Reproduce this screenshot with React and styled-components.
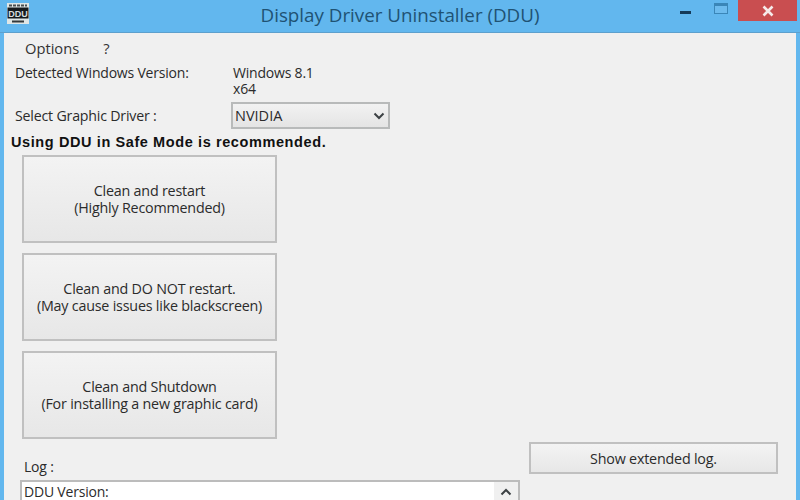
import React from "react";
import styled, { createGlobalStyle } from "styled-components";

const GlobalStyle = createGlobalStyle`
  html, body {
    margin: 0;
    padding: 0;
    width: 800px;
    height: 500px;
    overflow: hidden;
    background: #62b7ee;
  }
  * {
    box-sizing: border-box;
  }
`;

const App = () => {
  return (
    <Win>
      <GlobalStyle />
      <TitleBar>
        <AppIcon viewBox="0 0 22 21">
          <rect x="0" y="0" width="22" height="21" fill="#dfe6e6" />
          <path d="M2 2.5h18" stroke="#4a4e50" strokeWidth="2" strokeDasharray="3 1" />
          <rect x="0.5" y="4.5" width="21" height="11" fill="#15191c" />
          <text x="11" y="13.5" textAnchor="middle" fontFamily="Liberation Sans" fontWeight="700" fontSize="9" fill="#d5dcde">
            DDU
          </text>
          <rect x="5" y="17.5" width="12" height="2" fill="#33383a" />
        </AppIcon>
        <Title>Display Driver Uninstaller (DDU)</Title>
        <Controls>
          <MinButton />
          <MaxButton />
          <CloseButton>
            <svg width="12" height="12" viewBox="0 0 12 12">
              <path d="M1.5 1.5l9 9M10.5 1.5l-9 9" stroke="#f6eaea" strokeWidth="2.6" />
            </svg>
          </CloseButton>
        </Controls>
      </TitleBar>
      <Body>
        <Menu>
          <MenuItem>Options</MenuItem>
          <MenuItem>?</MenuItem>
        </Menu>
        <InfoRow>
          <InfoLabel>Detected Windows Version:</InfoLabel>
          <InfoValue>
            Windows 8.1
            <br />
            x64
          </InfoValue>
        </InfoRow>
        <SelectRow>
          <SelectLabel>Select Graphic Driver :</SelectLabel>
          <Combo>
            <span>NVIDIA</span>
            <svg width="12" height="8" viewBox="0 0 12 8">
              <path d="M1.5 1.5L6 6l4.5-4.5" fill="none" stroke="#3c4144" strokeWidth="2" />
            </svg>
          </Combo>
        </SelectRow>
        <Warning>Using DDU in Safe Mode is recommended.</Warning>
        <Actions>
          <ActionButton>
            Clean and restart
            <br />
            (Highly Recommended)
          </ActionButton>
          <ActionButton>
            Clean and DO NOT restart.
            <br />
            (May cause issues like blackscreen)
          </ActionButton>
          <ActionButton>
            Clean and Shutdown
            <br />
            (For installing a new graphic card)
          </ActionButton>
        </Actions>
        <Bottom>
          <LogColumn>
            <LogLabel>Log :</LogLabel>
            <LogBox>
              <LogText>DDU Version:</LogText>
              <ScrollBar>
                <svg width="12" height="8" viewBox="0 0 12 8">
                  <path d="M1.5 6.5L6 2l4.5 4.5" fill="none" stroke="#3c4144" strokeWidth="2" />
                </svg>
              </ScrollBar>
            </LogBox>
          </LogColumn>
          <LogButton>Show extended log.</LogButton>
        </Bottom>
      </Body>
    </Win>
  );
};
export default App;

const Win = styled.div`
  width: 800px;
  height: 500px;
  display: flex;
  flex-direction: column;
  overflow: hidden;
  background: #62b7ee;
  font-family: "Open Sans", "Liberation Sans", sans-serif;
  color: #2b2b2b;
`;
const TitleBar = styled.div`
  height: 33px;
  flex-shrink: 0;
  display: flex;
  align-items: flex-start;
  position: relative;
  padding-left: 7px;
  border-bottom: 1px solid #5da0cd;
`;
const AppIcon = styled.svg`
  width: 22px;
  height: 21px;
  margin-top: 3px;
`;
const Title = styled.div`
  position: absolute;
  left: 0;
  right: 0;
  top: 2px;
  text-align: center;
  font-size: 18.8px;
  line-height: 26px;
  color: #1f5273;
`;
const Controls = styled.div`
  margin-left: auto;
  display: flex;
  align-items: flex-start;
  margin-right: 3px;
`;
const MinButton = styled.div`
  width: 11px;
  height: 3px;
  background: #143a58;
  margin-top: 11px;
  margin-right: 23px;
`;
const MaxButton = styled.div`
  width: 14px;
  height: 11px;
  margin-top: 3px;
  margin-right: 10px;
  border: 1.5px solid #3a86b8;
  border-top-width: 3px;
  background: #6dbbee;
`;
const CloseButton = styled.div`
  width: 59px;
  height: 21px;
  background: #c94e50;
  display: flex;
  align-items: center;
  justify-content: center;
`;
const Body = styled.div`
  flex: 1;
  min-height: 0;
  margin: 0 4px;
  background: #f0f0f0;
  display: flex;
  flex-direction: column;
  font-size: 14px;
  letter-spacing: -0.2px;
  & > * {
    flex-shrink: 0;
  }
`;
const Menu = styled.div`
  display: flex;
  gap: 24px;
  padding: 4px 0 0 21px;
  height: 32px;
  font-size: 14.7px;
  line-height: 22px;
  letter-spacing: 0;
`;
const MenuItem = styled.div`
  color: #333;
`;
const InfoRow = styled.div`
  display: flex;
  padding-left: 11px;
  height: 37px;
  line-height: 16px;
`;
const InfoLabel = styled.div`
  width: 218px;
`;
const InfoValue = styled.div``;
const SelectRow = styled.div`
  display: flex;
  align-items: center;
  padding-left: 11px;
  height: 27px;
`;
const SelectLabel = styled.div`
  width: 216px;
  font-size: 14.2px;
`;
const Combo = styled.div`
  width: 159px;
  height: 27px;
  border: 2px solid #b8baba;
  background: linear-gradient(#f2f2f2, #e4e4e4);
  display: flex;
  align-items: center;
  justify-content: space-between;
  padding: 0 2px;
  font-size: 14.5px;
  letter-spacing: 0;
  & svg {
    margin-right: 1px;
  }
`;
const Warning = styled.div`
  padding: 5px 0 0 7px;
  height: 26px;
  font-family: "Liberation Sans", sans-serif;
  font-size: 14.5px;
  line-height: 16px;
  font-weight: 700;
  letter-spacing: 0.6px;
  color: #111;
`;
const Actions = styled.div`
  display: flex;
  flex-direction: column;
  gap: 10px;
  padding-left: 18px;
`;
const ActionButton = styled.div`
  width: 255px;
  height: 88px;
  border: 2px solid #c0c0c0;
  background: linear-gradient(#f3f3f3, #e7e7e7);
  display: flex;
  align-items: center;
  justify-content: center;
  text-align: center;
  font-size: 14.3px;
  line-height: 17.5px;
`;
const Bottom = styled.div`
  display: flex;
  margin-top: 3px;
  padding-left: 16px;
  gap: 9px;
`;
const LogColumn = styled.div`
  width: 500px;
`;
const LogLabel = styled.div`
  height: 38px;
  padding: 16px 0 0 4px;
  line-height: 18px;
`;
const LogBox = styled.div`
  height: 40px;
  border: 2px solid #bcbcbc;
  background: #fff;
  display: flex;
  justify-content: space-between;
`;
const LogText = styled.div`
  padding: 1px 0 0 2px;
  line-height: 18px;
`;
const ScrollBar = styled.div`
  width: 24px;
  background: #f0f0f0;
  display: flex;
  justify-content: center;
  padding-top: 6px;
`;
const LogButton = styled.div`
  width: 249px;
  height: 32px;
  border: 2px solid #c0c0c0;
  background: linear-gradient(#f3f3f3, #e7e7e7);
  display: flex;
  align-items: center;
  justify-content: center;
  font-size: 14.3px;
`;
